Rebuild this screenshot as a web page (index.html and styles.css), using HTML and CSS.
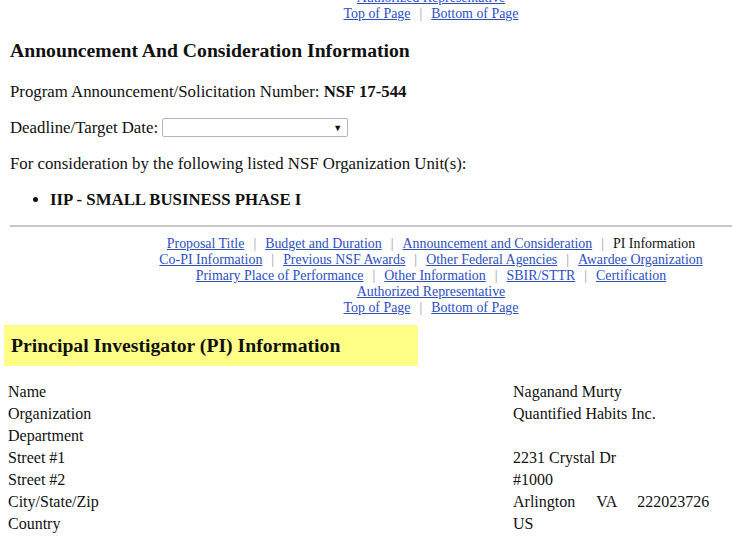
FILE: index.html
```html
<!DOCTYPE html>
<html>
<head>
<meta charset="utf-8">
<link rel="stylesheet" href="styles.css">
</head>
<body>
<div class="page">
  <div class="nav nav-top">
    <a href="#">Authorized Representative</a><br>
    <a href="#">Top of Page</a><span class="sep">|</span><a href="#">Bottom of Page</a>
  </div>

  <h3 class="section-title">Announcement And Consideration Information</h3>
  <p class="line">Program Announcement/Solicitation Number: <b>NSF 17-544</b></p>
  <p class="line">Deadline/Target Date: <span class="select"><span class="arrow">&#9660;</span></span></p>
  <p class="line">For consideration by the following listed NSF Organization Unit(s):</p>
  <ul class="units">
    <li><b>IIP - SMALL BUSINESS PHASE I</b></li>
  </ul>

  <hr class="rule">

  <div class="nav">
    <a href="#">Proposal Title</a><span class="sep">|</span><a href="#">Budget and Duration</a><span class="sep">|</span><a href="#">Announcement and Consideration</a><span class="sep">|</span><span class="current">PI Information</span><br>
    <a href="#">Co-PI Information</a><span class="sep">|</span><a href="#">Previous NSF Awards</a><span class="sep">|</span><a href="#">Other Federal Agencies</a><span class="sep">|</span><a href="#">Awardee Organization</a><br>
    <a href="#">Primary Place of Performance</a><span class="sep">|</span><a href="#">Other Information</a><span class="sep">|</span><a href="#">SBIR/STTR</a><span class="sep">|</span><a href="#">Certification</a><br>
    <a href="#">Authorized Representative</a><br>
    <a href="#">Top of Page</a><span class="sep">|</span><a href="#">Bottom of Page</a>
  </div>

  <h3 class="banner">Principal Investigator (PI) Information</h3>

  <div class="info">
    <div class="label">Name</div><div class="value">Naganand Murty</div>
    <div class="label">Organization</div><div class="value">Quantified Habits Inc.</div>
    <div class="label">Department</div><div class="value"></div>
    <div class="label">Street #1</div><div class="value">2231 Crystal Dr</div>
    <div class="label">Street #2</div><div class="value">#1000</div>
    <div class="label">City/State/Zip</div><div class="value"><span class="city">Arlington</span><span class="state">VA</span><span>222023726</span></div>
    <div class="label">Country</div><div class="value">US</div>
  </div>
</div>
</body>
</html>
```
FILE: styles.css
```css
html, body {
  margin: 0;
  padding: 0;
  background: #ffffff;
  overflow: hidden;
}
body {
  font-family: "Liberation Serif", "Times New Roman", serif;
  color: #111111;
  font-size: 16px;
}
.page {
  padding: 0 8px;
  margin-top: -10px;
}
.nav {
  font-size: 13.9px;
  line-height: 16px;
  text-align: center;
  padding-left: 130px;
}
.nav a {
  color: #2e4fbf;
  text-decoration: underline;
}
.nav .sep {
  color: #999999;
  margin: 0 9px;
}
.nav .current {
  color: #111111;
}
.section-title {
  font-size: 19.7px;
  margin: 17px 0 21px 2px;
  line-height: 22px;
}
.line {
  margin: 17px 0 0 2px;
  line-height: 19px;
  font-size: 16.8px;
}
.select {
  display: inline-block;
  vertical-align: middle;
  width: 186px;
  height: 19px;
  border: 1px solid #b5b5b5;
  border-radius: 2px;
  box-sizing: border-box;
  position: relative;
  margin-top: -3px;
}
.select .arrow {
  position: absolute;
  right: 5px;
  top: 3px;
  font-size: 9px;
  line-height: 12px;
  color: #111;
}
.units {
  margin: 17px 0 0 0;
  padding-left: 42px;
  line-height: 19px;
  font-size: 16.8px;
}
.rule {
  border: 0;
  height: 2px;
  background: #c8c8c8;
  margin: 16px -20px 0 2px;
}
.rule + .nav {
  margin-top: 9px;
}
.banner {
  background: #ffff88;
  width: 400px;
  margin: 9px 0 0 -4px;
  padding: 9px 7px 10px;
  font-size: 19.7px;
  line-height: 22px;
}
.info {
  display: grid;
  grid-template-columns: 505px 1fr;
  row-gap: 3px;
  margin-top: 16px;
  line-height: 19px;
  font-size: 16px;
}
.info .value .city {
  margin-right: 21px;
}
.info .value .state {
  margin-right: 20px;
}
```
